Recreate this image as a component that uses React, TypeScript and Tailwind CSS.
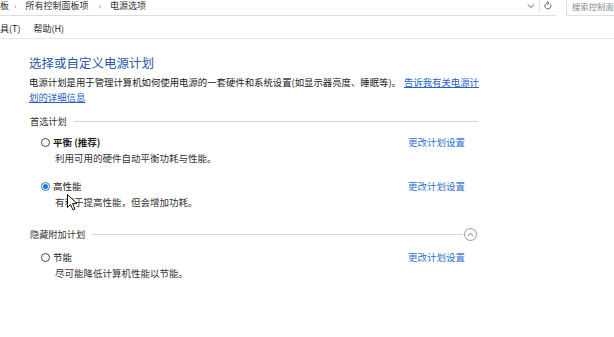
import React from "react";

function Radio({ checked }: { checked?: boolean }) {
  return checked ? (
    <span className="flex h-[9px] w-[9px] shrink-0 items-center justify-center rounded-full border border-[#1f78d6] bg-white">
      <span className="h-[5px] w-[5px] rounded-full bg-[#1f78d6]" />
    </span>
  ) : (
    <span className="h-[9px] w-[9px] shrink-0 rounded-full border border-[#444444] bg-white" />
  );
}

function Plan({
  name,
  desc,
  checked,
  bold,
  className,
  cursor,
}: {
  name: React.ReactNode;
  desc: string;
  checked?: boolean;
  bold?: boolean;
  className?: string;
  cursor?: boolean;
}) {
  return (
    <div className={className}>
      <div className="flex h-[14px] items-center pl-[12px] pr-[13px]">
        <Radio checked={checked} />
        <span
          className={
            "ml-[3px] text-[9.5px] leading-[14px] text-[#1e1e1e] " +
            (bold ? "font-bold" : "")
          }
        >
          {name}
        </span>
        <span className="ml-auto text-[9.5px] leading-[14px] text-[#2f6fcf]">
          更改计划设置
        </span>
      </div>
      <div className="relative mt-[2px] pl-[26px] text-[9.5px] leading-[14px] text-[#333333]">
        {desc}
        {cursor && (
          <svg
            className="absolute left-[38px] top-[-1px]"
            width="12"
            height="17"
            viewBox="0 0 12 17"
          >
            <path
              d="M0.5 0.5 L0.5 13.5 L3.5 10.5 L6 16 L8 15 L5.6 9.6 L10 9.6 Z"
              fill="#ffffff"
              stroke="#111111"
              strokeWidth="1"
              strokeLinejoin="round"
            />
          </svg>
        )}
      </div>
    </div>
  );
}

function SectionHeader({
  label,
  className,
  toggle,
}: {
  label: string;
  className?: string;
  toggle?: boolean;
}) {
  return (
    <div className={"flex h-[14px] items-center pl-[1px] " + (className ?? "")}>
      <span className="text-[9.2px] leading-[14px] text-[#333333]">{label}</span>
      <div className="ml-[7px] h-px flex-1 bg-[#d6d6d6]" />
      {toggle && (
        <span className="ml-[1px] flex h-[13px] w-[13px] items-center justify-center rounded-full border border-[#9a9a9a] bg-white">
          <svg width="7" height="5" viewBox="0 0 7 5">
            <path d="M0.8 4 L3.5 1.2 L6.2 4" fill="none" stroke="#777777" strokeWidth="1" />
          </svg>
        </span>
      )}
    </div>
  );
}

export default function App() {
  return (
    <div className="h-[337px] w-[614px] overflow-hidden bg-white font-['Noto_Sans_CJK_SC','Noto_Sans',sans-serif]">
      {/* Address bar */}
      <div className="flex h-[16px]">
        <div className="flex flex-1 items-center border-b border-[#dedede] text-[9px] leading-[12px] text-[#333333]">
          <span className="-mt-[4px]">板</span>
          <span className="-mt-[4px] ml-[5px] text-[8px] text-[#777777]">›</span>
          <span className="-mt-[4px] ml-[9px]">所有控制面板项</span>
          <span className="-mt-[4px] ml-[10px] text-[8px] text-[#777777]">›</span>
          <span className="-mt-[4px] ml-[9px]">电源选项</span>
          <span className="-mt-[4px] ml-auto text-[#555555]">
            <svg width="8" height="6" viewBox="0 0 8 6">
              <path d="M1 1.5 L4 4.5 L7 1.5" fill="none" stroke="#555555" strokeWidth="1" />
            </svg>
          </span>
          <span className="-mt-[4px] ml-[4px] h-[12px] w-px bg-[#e2e2e2]" />
          <span className="-mt-[4px] ml-[4px] mr-[4px]">
            <svg width="8" height="9" viewBox="0 0 8 9">
              <path
                d="M6.3 3.2 A3 3 0 1 1 4.6 2"
                fill="none"
                stroke="#555555"
                strokeWidth="0.9"
              />
              <path d="M3.4 0.6 L5 2 L3.4 3.4" fill="none" stroke="#555555" strokeWidth="0.9" />
            </svg>
          </span>
        </div>
        <div className="ml-[10px] flex w-[48px] items-center overflow-hidden border-b border-l border-[#dedede] pl-[5px]">
          <span className="-mt-[3px] whitespace-nowrap text-[8.4px] leading-[12px] text-[#8a8a8a]">
            搜索控制面
          </span>
        </div>
      </div>

      {/* Menu bar */}
      <div className="flex h-[23px] items-end border-b border-[#e6e6e6] pb-[2px] text-[9px] leading-[12px] text-[#222222]">
        <span className="mb-[1px]">具(T)</span>
        <span className="mb-[1px] ml-[13px]">帮助(H)</span>
      </div>

      {/* Content */}
      <div className="w-[478px] pl-[29px] pt-[16px]">
        <div className="text-[12.5px] leading-[16px] text-[#2d58a3]">选择或自定义电源计划</div>
        <div className="mt-[3.5px] text-[9.4px] leading-[15px] text-[#222222]">
          <div className="whitespace-nowrap">
            电源计划是用于管理计算机如何使用电源的一套硬件和系统设置(如显示器亮度、睡眠等)。
            <span className="ml-[3px] text-[#1f63c6] underline">告诉我有关电源计</span>
          </div>
          <div>
            <span className="text-[#1f63c6] underline">划的详细信息</span>
          </div>
        </div>

        <SectionHeader label="首选计划" className="mt-[9.5px]" />
        <Plan
          className="mt-[7px]"
          name="平衡 (推荐)"
          bold
          desc="利用可用的硬件自动平衡功耗与性能。"
        />
        <Plan
          className="mt-[14px]"
          name="高性能"
          checked
          desc="有利于提高性能，但会增加功耗。"
          cursor
        />

        <SectionHeader label="隐藏附加计划" className="mt-[18px] pr-[1px]" toggle />
        <Plan className="mt-[9px]" name="节能" desc="尽可能降低计算机性能以节能。" />
      </div>
    </div>
  );
}
